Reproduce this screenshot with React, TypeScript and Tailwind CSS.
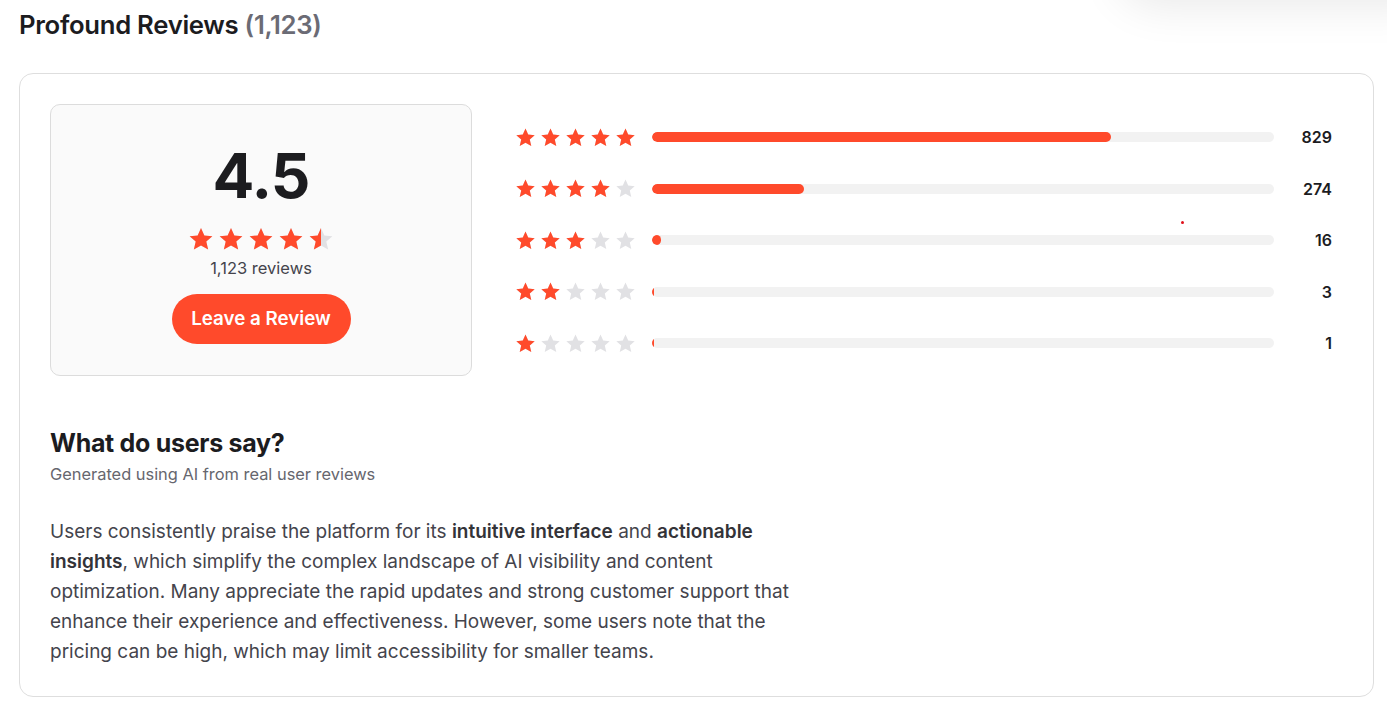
import React from "react";

const STAR =
  "M12 1.8l3.1 6.9 7.4.7-5.6 5 1.7 7.4L12 17.9l-6.6 3.9 1.7-7.4-5.6-5 7.4-.7z";

const Star = ({ fill, size }: { fill: number; size: number }) => {
  const id = React.useId();
  return (
    <svg width={size} height={size} viewBox="0 0 24 24" className="shrink-0">
      <defs>
        <clipPath id={id}>
          <rect x="0" y="0" width={24 * fill} height="24" />
        </clipPath>
      </defs>
      <path d={STAR} fill="#e1e1e4" />
      <path d={STAR} fill="#ff4a2b" clipPath={`url(#${id})`} />
    </svg>
  );
};

const Stars = ({
  value,
  size,
  gap,
}: {
  value: number;
  size: number;
  gap: string;
}) => (
  <div className={`flex items-center ${gap}`}>
    {[0, 1, 2, 3, 4].map((i) => (
      <Star key={i} size={size} fill={Math.max(0, Math.min(1, value - i))} />
    ))}
  </div>
);

const rows = [
  { stars: 5, count: 829 },
  { stars: 4, count: 274 },
  { stars: 3, count: 16 },
  { stars: 2, count: 3 },
  { stars: 1, count: 1 },
];
const total = 1123;

export default function App() {
  return (
    <div
      className="relative min-h-[706px] w-full overflow-hidden bg-white text-[#1c1c1f]"
      style={{ fontFamily: "Inter, 'Noto Sans', sans-serif" }}
    >
      {/* shadow of a floating element sitting just above the viewport */}
      <div className="absolute -top-[80px] right-[-60px] h-[80px] w-[330px] rounded-[40px] bg-white shadow-[0_6px_45px_rgba(0,0,0,0.09)]" />

      <div className="relative pl-[19px] pr-[13px] pt-[9px]">
        <h2 className="text-[25.7px] font-semibold leading-[32px] tracking-[-0.3px]">
          Profound Reviews <span className="text-[#6b6b75]">(1,123)</span>
        </h2>

        <div className="mt-[32px] rounded-[14px] border border-[#dedede] pb-[29px] pl-[30px] pr-[41px] pt-[30px]">
          <div className="flex gap-[43px]">
            <div className="flex h-[272px] w-[422px] shrink-0 flex-col items-center rounded-[10px] border border-[#dcdcdc] bg-[#fafafa] pt-[34px]">
              <div className="text-[62px] font-bold leading-[74px] tracking-[-1px]">
                4.5
              </div>
              <div className="mt-[13px]">
                <Stars value={4.5} size={26} gap="gap-[4px]" />
              </div>
              <div className="mt-[4px] text-[16.5px] leading-[24px] text-[#44444c]">
                1,123 reviews
              </div>
              <button className="mt-[14px] h-[50px] w-[179px] rounded-full bg-[#ff4a2b] text-[18.8px] font-semibold text-white">
                Leave a Review
              </button>
            </div>

            <div className="relative flex flex-1 flex-col justify-center gap-[27.5px]">
              {rows.map((r) => (
                <div key={r.stars} className="flex h-[24px] items-center">
                  <Stars value={r.stars} size={21} gap="gap-[4px]" />
                  <div className="ml-[16px] h-[10px] flex-1 overflow-hidden rounded-full bg-[#f2f2f2]">
                    <div
                      className="h-full rounded-full bg-[#ff4a2b]"
                      style={{
                        width: `${(r.count / total) * 100}%`,
                        minWidth: 2,
                      }}
                    />
                  </div>
                  <div className="w-[58px] text-right text-[16px] font-semibold text-[#1c1c1f]">
                    {r.count}
                  </div>
                </div>
              ))}
              <div className="absolute left-[666px] top-[117px] h-[3px] w-[3px] rounded-full bg-[#e0101a]" />
            </div>
          </div>

          <h3 className="mt-[51px] text-[25px] font-bold leading-[32px] tracking-[-0.3px]">
            What do users say?
          </h3>
          <p className="mt-[3px] text-[16.4px] leading-[24px] text-[#66666e]">
            Generated using AI from real user reviews
          </p>
          <p className="mt-[31px] w-[752px] text-[19px] leading-[30px] text-[#44444c]">
            Users consistently praise the platform for its{" "}
            <strong className="font-semibold text-[#333338]">
              intuitive interface
            </strong>{" "}
            and{" "}
            <strong className="font-semibold text-[#333338]">
              actionable insights
            </strong>
            , which simplify the complex landscape of AI visibility and content
            optimization. Many appreciate the rapid updates and strong customer
            support that enhance their experience and effectiveness. However,
            some users note that the pricing can be high, which may limit
            accessibility for smaller teams.
          </p>
        </div>
      </div>
    </div>
  );
}
